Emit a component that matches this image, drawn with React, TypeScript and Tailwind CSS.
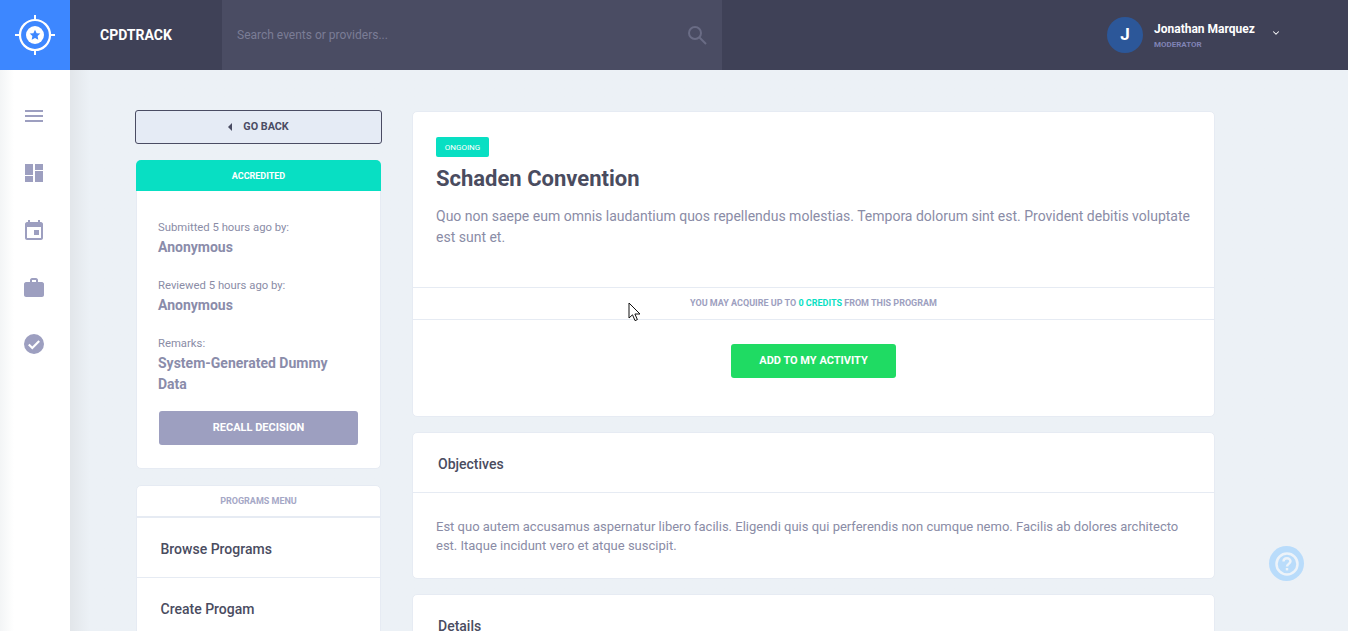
import React from 'react';
import { ChevronDown } from 'lucide-react';

const iconColor = '#9d9fc0';

const Logo = () => (
  <svg width="40" height="40" viewBox="0 0 40 40" fill="none">
    <circle cx="20" cy="20" r="15" stroke="#fff" strokeWidth="2.2" />
    <circle cx="20" cy="20" r="9" fill="#fff" />
    <path d="M20 14.8l1.6 3.4 3.7.4-2.7 2.5.7 3.6-3.3-1.8-3.3 1.8.7-3.6-2.7-2.5 3.7-.4z" fill="#3d87ff" />
    <path d="M20 0v6M20 34v6M0 20h6M34 20h6" stroke="#fff" strokeWidth="2" />
  </svg>
);

const MenuIcon = () => (
  <svg width="18" height="12" viewBox="0 0 18 12" fill={iconColor}>
    <rect width="18" height="2" />
    <rect y="5" width="18" height="2" />
    <rect y="10" width="18" height="2" />
  </svg>
);

const DashboardIcon = () => (
  <svg width="18" height="18" viewBox="0 0 18 18" fill={iconColor}>
    <rect width="8" height="11" />
    <rect x="10" width="8" height="6" />
    <rect y="12" width="8" height="6" />
    <rect x="10" y="7" width="8" height="11" />
  </svg>
);

const CalendarIcon = () => (
  <svg width="18" height="20" viewBox="0 0 18 20" fill={iconColor}>
    <path d="M3 0h2v2h8V0h2v2h1c1 0 2 1 2 2v14c0 1-1 2-2 2H2c-1 0-2-1-2-2V4c0-1 1-2 2-2h1zM2 7v11h14V7z" />
    <rect x="9" y="10" width="5" height="5" />
  </svg>
);

const BriefcaseIcon = () => (
  <svg width="20" height="19" viewBox="0 0 20 19" fill={iconColor}>
    <path d="M6 4V2c0-1 1-2 2-2h4c1 0 2 1 2 2v2h4c1 0 2 1 2 2v11c0 1-1 2-2 2H2c-1 0-2-1-2-2V6c0-1 1-2 2-2zm2 0h4V2H8z" />
  </svg>
);

const CheckIcon = () => (
  <svg width="20" height="20" viewBox="0 0 20 20">
    <circle cx="10" cy="10" r="10" fill={iconColor} />
    <path d="M4.8 10.5l3.5 3.5L15.2 7" stroke="#fff" strokeWidth="2.2" fill="none" />
  </svg>
);

const SearchIcon = () => (
  <svg width="20" height="20" viewBox="0 0 20 20" fill="none" stroke="#6a6c85" strokeWidth="2">
    <circle cx="8" cy="8" r="6" />
    <path d="M12.5 12.5L19 19" />
  </svg>
);

const HelpIcon = () => (
  <svg width="26" height="26" viewBox="0 0 26 26" fill="none">
    <circle cx="13" cy="13" r="10.5" stroke="#edf3f9" strokeWidth="2.5" />
    <path d="M9.5 10.5c0-2 1.6-3.3 3.5-3.3s3.5 1.3 3.5 3.1c0 2.6-3.5 2.6-3.5 5.2" stroke="#edf3f9" strokeWidth="2.4" />
    <rect x="11.8" y="17" width="2.4" height="2.4" fill="#edf3f9" />
  </svg>
);

const Cursor = () => (
  <svg width="13" height="20" viewBox="0 0 13 20">
    <path d="M1 1v15l3.5-3.2L7 18.6l2.4-1-2.5-5.6H12z" fill="#fff" stroke="#111" strokeWidth="1" />
  </svg>
);

const ReviewBlock = ({ label, value }: { label: string; value: string }) => (
  <div className="mb-[20px] -ml-px">
    <p className="text-[11.3px] leading-[16px] text-[#8a8ca6]">{label}</p>
    <p className="mt-px text-[14px] leading-[21px] font-bold text-[#8a8caa]">{value}</p>
  </div>
);

export default function App() {
  return (
    <div className="relative flex h-[631px] flex-col overflow-hidden bg-[#ecf1f6] font-['Roboto',sans-serif]">
      {/* top bar */}
      <header className="flex h-[70px] shrink-0 bg-[#3f4157]">
        <div className="flex w-[70px] items-center justify-center bg-[#3d87ff]">
          <Logo />
        </div>
        <div className="flex w-[152px] items-center pl-[30px] text-[14px] font-bold text-white">CPDTRACK</div>
        <div className="flex w-[500px] items-center justify-between bg-[#4a4c63] px-[15px] text-[12px] text-[#7b7d96]">
          <span>Search events or providers...</span>
          <SearchIcon />
        </div>
        <div className="ml-[385px] flex items-center">
          <div className="flex h-9 w-9 items-center justify-center rounded-full bg-[#2c5799] text-[17px] font-bold text-white">J</div>
          <div className="ml-[11px] pt-px">
            <p className="text-[12px] leading-[16px] font-bold text-white">Jonathan Marquez</p>
            <p className="mt-[2px] text-[8px] leading-[12px] font-bold text-[#8083b5]">MODERATOR</p>
          </div>
          <ChevronDown size={10} strokeWidth={2.5} className="mt-[-4px] ml-[16px] text-white" />
        </div>
      </header>

      <div className="flex min-h-0 flex-1">
        {/* side nav */}
        <nav className="flex w-[70px] shrink-0 flex-col items-center gap-[37px] bg-gradient-to-r from-[#f3f5f6] from-0% to-white to-20% pt-[36px] pr-[2px]">
          <div className="flex h-5 items-center"><MenuIcon /></div>
          <div className="flex h-5 items-center"><DashboardIcon /></div>
          <div className="flex h-5 items-center"><CalendarIcon /></div>
          <div className="flex h-5 items-center"><BriefcaseIcon /></div>
          <div className="flex h-5 items-center"><CheckIcon /></div>
        </nav>

        {/* page */}
        <main className="flex flex-1 gap-[30px] bg-gradient-to-r from-[#e2e6ea] to-[#ecf1f6] to-[20px] bg-no-repeat pt-[40px] pl-[65px]">
          {/* left column */}
          <div className="flex w-[247px] shrink-0 flex-col">
            <button className="flex h-[34px] shrink-0 items-center justify-center rounded-[3px] border border-[#4a4c63] bg-[#e5ebf5] text-[10.8px] font-bold text-[#4a4c63]">
              <span className="mr-[11px] h-0 w-0 border-y-[4px] border-r-[4px] border-y-transparent border-r-[#4a4c63]" />
              GO BACK
            </button>

            <section className="mt-[16px] ml-px w-[245px] shrink-0 rounded-[5px] border border-[#e6ebf3] bg-white">
              <div className="-mx-px -mt-px flex h-[31px] items-center justify-center rounded-t-[5px] bg-[#08dfc3] pt-[2px] text-[9px] font-bold text-white">ACCREDITED</div>
              <div className="px-[22px] pt-[29px] pb-[23px]">
                <ReviewBlock label="Submitted 5 hours ago by:" value="Anonymous" />
                <ReviewBlock label="Reviewed 5 hours ago by:" value="Anonymous" />
                <ReviewBlock label="Remarks:" value="System-Generated Dummy Data" />
                <button className="mt-[-4px] flex h-[34px] w-full items-center justify-center rounded-[3px] bg-[#9d9fc0] text-[11px] font-bold text-white">RECALL DECISION</button>
              </div>
            </section>

            <section className="mt-[16px] ml-px w-[245px] shrink-0 rounded-t-[5px] border border-[#e6ebf3] bg-white">
              <div className="flex h-[32px] items-center justify-center border-b-2 border-[#e6ebf3] pt-px text-[9px] font-bold text-[#a5a7c6]">PROGRAMS MENU</div>
              <div className="flex h-[60px] items-center border-b border-[#e6ebf3] pt-[4px] pl-[23.5px] text-[14px] font-medium text-[#4a4c5f]">Browse Programs</div>
              <div className="flex h-[60px] items-center pt-[3px] pl-[23.5px] text-[14px] font-medium text-[#4a4c5f]">Create Progam</div>
            </section>
          </div>

          {/* right column */}
          <div className="flex w-[803px] shrink-0 flex-col gap-[15px] pt-px">
            <section className="h-[306px] shrink-0 rounded-[5px] border border-[#e6ebf3] bg-white">
              <div className="h-[175px] px-[23px] pt-[25px]">
                <span className="flex h-[20px] w-[53px] items-center justify-center rounded-[2px] bg-[#08dfc3] pt-[2px] text-[8px] font-normal text-white">ONGOING</span>
                <h1 className="mt-[8px] text-[22px] leading-[28px] font-bold text-[#4a4c5f]">Schaden Convention</h1>
                <p className="mt-[13px] text-[14px] leading-[21px] text-[#8a8ca6]">
                  Quo non saepe eum omnis laudantium quos repellendus molestias. Tempora dolorum sint est. Provident debitis voluptate est sunt et.
                </p>
              </div>
              <div className="flex h-[33px] items-center justify-center border-y border-[#e6ebf3] text-[9px] font-bold text-[#9d9fc0]">
                YOU MAY ACQUIRE UP TO&nbsp;<span className="text-[#08dfc3]">0 CREDITS</span>&nbsp;FROM THIS PROGRAM
              </div>
              <div className="flex justify-center pt-[24px]">
                <button className="flex h-[34px] w-[165px] items-center justify-center rounded-[3px] bg-[#1fdb63] text-[11px] font-bold text-white">ADD TO MY ACTIVITY</button>
              </div>
            </section>

            <section className="h-[147px] shrink-0 rounded-[5px] border border-[#e6ebf3] bg-white">
              <div className="flex h-[60px] items-center border-b border-[#e6ebf3] pt-[3px] pl-[25px] text-[14px] font-medium text-[#4a4c5f]">Objectives</div>
              <p className="px-[23px] pt-[24px] text-[13px] leading-[19px] text-[#8a8ca6]">
                Est quo autem accusamus aspernatur libero facilis. Eligendi quis qui perferendis non cumque nemo. Facilis ab dolores architecto est. Itaque incidunt vero et atque suscipit.
              </p>
            </section>

            <section className="shrink-0 rounded-t-[5px] border border-[#e6ebf3] bg-white">
              <div className="flex h-[60px] items-center pt-[2px] pl-[25px] text-[14px] font-medium text-[#4a4c5f]">Details</div>
            </section>
          </div>
        </main>
      </div>

      {/* floating help button */}
      <div className="absolute top-[546px] left-[1269px] flex h-[35px] w-[35px] items-center justify-center rounded-full bg-[#b9dcfb]">
        <HelpIcon />
      </div>

      {/* captured mouse pointer */}
      <div className="absolute top-[302px] left-[628px]">
        <Cursor />
      </div>
    </div>
  );
}
